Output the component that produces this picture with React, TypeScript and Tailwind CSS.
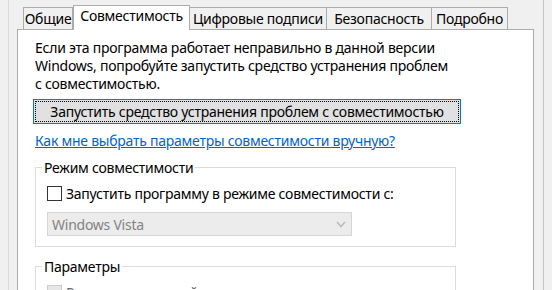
function Tab({ label, width, active, first }: { label: string; width: string; active?: boolean; first?: boolean }) {
  if (active) {
    return (
      <div
        className={`relative z-10 -mb-px flex h-[25px] ${width} items-start justify-center border border-b-0 border-[#acacac] bg-white pt-[1px]`}
      >
        {label}
      </div>
    );
  }
  return (
    <div
      className={`mt-[2px] flex h-[22px] ${width} ${first ? "" : "-ml-px"} items-center justify-center border border-b-0 border-[#acacac] bg-[#f0f0f0]`}
    >
      {label}
    </div>
  );
}

export default function App() {
  return (
    <div className="flex h-[290px] w-[552px] overflow-hidden bg-[#f0f0f0] font-['Noto_Sans',sans-serif] text-[14px] leading-[17px] tracking-[-0.25px] text-black">
      <div className="w-[8px]" />
      <div className="w-px bg-[#dadada]" />

      <div className="flex w-[534px] flex-col pl-[8px] pt-[5px]">
        {/* tabs */}
        <div className="flex h-[24px] items-start pl-[6px]">
          <Tab label="Общие" width="w-[50px]" first />
          <Tab label="Совместимость" width="w-[117px]" active />
          <Tab label="Цифровые подписи" width="w-[138px]" />
          <Tab label="Безопасность" width="w-[106px]" />
          <Tab label="Подробно" width="w-[77px]" />
        </div>

        {/* panel */}
        <div className="w-[517px] flex-1 border border-b-0 border-[#acacac] bg-white pl-[17px] pt-[9px]">
          <p className="leading-[18px]">
            Если эта программа работает неправильно в данной версии
            <br />
            Windows, попробуйте запустить средство устранения проблем
            <br />с совместимостью.
          </p>

          <button className="relative -ml-[2px] mt-[6px] h-[25px] w-[428px] border border-[#0078d7] bg-[#e1e1e1] p-[1px] tracking-[-0.25px]">
            <span className="flex h-full w-full items-center justify-center border border-dotted border-black">
              Запустить средство устранения проблем с совместимостью
            </span>
          </button>

          <div className="mt-[8px] text-[#0066cc] underline">Как мне выбрать параметры совместимости вручную?</div>

          <fieldset className="mt-[10px] h-[88px] w-[421px] border border-[#dcdcdc]">
            <legend className="ml-[6px] px-[2px]">Режим совместимости</legend>
            <div className="pl-[11px]">
              <div className="mt-[9px] flex items-center gap-[4px]">
                <span className="h-[15px] w-[15px] border border-[#333333] bg-white" />
                <span>Запустить программу в режиме совместимости с:</span>
              </div>
              <div className="mt-[10px] flex h-[24px] w-[305px] items-center justify-between border border-[#d6d6d6] bg-[#ececec] pl-[4px] pr-[5px] text-[#838383]">
                <span>Windows Vista</span>
                <svg width="10" height="7" viewBox="0 0 10 7" fill="none" stroke="#bcbcbc" strokeWidth="1.6">
                  <path d="M1 1 L5 5.5 L9 1" />
                </svg>
              </div>
            </div>
          </fieldset>

          <fieldset className="mt-[11px] h-[60px] w-[421px] border border-[#dcdcdc]">
            <legend className="ml-[6px] px-[2px]">Параметры</legend>
            <div className="mt-[9px] flex items-center gap-[4px] pl-[11px] text-[#6d6d6d]">
              <span className="h-[15px] w-[15px] border border-[#cccccc] bg-[#e6e6e6]" />
              <span>Режим пониженной цветности</span>
            </div>
          </fieldset>
        </div>
      </div>

      <div className="w-px bg-[#c4c4c4]" />
    </div>
  );
}
